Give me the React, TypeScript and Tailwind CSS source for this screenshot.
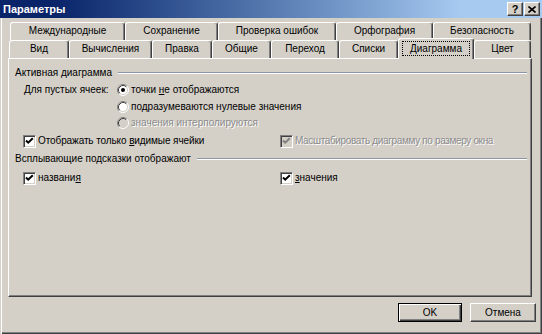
import React from "react";

function Radio({ checked = false, disabled = false }: { checked?: boolean; disabled?: boolean }) {
  return (
    <svg width="12" height="12" viewBox="0 0 12 12" className="shrink-0">
      <circle cx="6" cy="6" r="5" fill={disabled ? "#d4d0c8" : "#ffffff"} />
      <path d="M2.11 9.89 A5.5 5.5 0 0 1 9.89 2.11" stroke="#808080" strokeWidth="1" fill="none" />
      <path d="M9.89 2.11 A5.5 5.5 0 0 1 2.11 9.89" stroke="#ffffff" strokeWidth="1" fill="none" />
      <path d="M2.82 9.18 A4.5 4.5 0 0 1 9.18 2.82" stroke="#404040" strokeWidth="1" fill="none" />
      <path d="M9.18 2.82 A4.5 4.5 0 0 1 2.82 9.18" stroke="#d4d0c8" strokeWidth="1" fill="none" />
      {checked && <circle cx="6" cy="6" r="2" fill="#000000" />}
    </svg>
  );
}

function Check({ checked = true, disabled = false }: { checked?: boolean; disabled?: boolean }) {
  return (
    <div
      className={
        disabled
          ? "w-[13px] h-[13px] shrink-0 bg-[#d4d0c8] border border-t-[#808080] border-l-[#808080] border-r-white border-b-white shadow-[inset_1px_1px_0_#404040,inset_-1px_-1px_0_#d4d0c8] flex items-center justify-center"
          : "w-[13px] h-[13px] shrink-0 bg-white border border-t-[#808080] border-l-[#808080] border-r-white border-b-white shadow-[inset_1px_1px_0_#404040,inset_-1px_-1px_0_#d4d0c8] flex items-center justify-center"
      }
    >
      {checked && (
        <svg width="9" height="9" viewBox="0 0 9 9">
          <path
            d="M1 3.5 L3.2 5.7 L7.8 1.2"
            stroke={disabled ? "#808080" : "#000000"}
            strokeWidth="2"
            fill="none"
          />
        </svg>
      )}
    </div>
  );
}

function Tab({ label, w }: { label: string; w: string }) {
  return (
    <div
      className={
        w +
        " h-[18px] shrink-0 flex items-start pt-[2px] justify-center border-l border-t border-white border-r border-r-[#404040] rounded-t-[3px] shadow-[inset_-1px_0_0_#808080]"
      }
    >
      {label}
    </div>
  );
}

function GroupHeader({ label }: { label: string }) {
  return (
    <div className="flex items-center h-[16px] pl-[6px] pr-[4px]">
      <span>{label}</span>
      <div className="flex-1 ml-[6px] h-[2px] border-t border-[#8a96a8] border-b border-b-white" />
    </div>
  );
}

export default function App() {
  return (
    <div className="w-[542px] h-[334px] bg-[#d4d0c8] flex flex-col font-['Liberation_Sans',Arial,sans-serif] text-[10px] leading-[12px] text-black overflow-hidden shadow-[inset_1px_0_0_#d4d0c8,inset_2px_0_0_#ffffff,inset_-1px_-1px_0_#404040,inset_-2px_-2px_0_#808080]">
      {/* Title bar */}
      <div className="h-[18px] shrink-0 flex items-center bg-linear-to-r from-[#0a246a] from-10% to-[#a6caf0] to-85% pl-[3px] pr-[2px]">
        <span className="flex-1 text-white font-bold text-[11px]">Параметры</span>
        <div className="flex gap-[1px]">
          <div className="w-[16px] h-[14px] bg-[#d4d0c8] border-t border-l border-white border-r border-b border-r-[#404040] border-b-[#404040] shadow-[inset_-1px_-1px_0_#808080] flex items-center justify-center font-bold text-[11px] leading-[11px]">
            ?
          </div>
          <div className="w-[16px] h-[14px] bg-[#d4d0c8] border-t border-l border-white border-r border-b border-r-[#404040] border-b-[#404040] shadow-[inset_-1px_-1px_0_#808080] flex items-center justify-center">
            <svg width="8" height="7" viewBox="0 0 8 7">
              <path d="M0.5 0.5 L7.5 6.5 M7.5 0.5 L0.5 6.5" stroke="#000" strokeWidth="1.6" />
            </svg>
          </div>
        </div>
      </div>

      {/* Tabs */}
      <div className="pt-[4px] flex flex-col">
        <div className="flex h-[18px] ml-[10px]">
          <Tab w="w-[115px]" label="Международные" />
          <Tab w="w-[93px]" label="Сохранение" />
          <Tab w="w-[118px]" label="Проверка ошибок" />
          <Tab w="w-[97px]" label="Орфография" />
          <Tab w="w-[98px]" label="Безопасность" />
        </div>
        <div className="flex h-[18px] ml-[9px] items-end">
          <Tab w="w-[60px]" label="Вид" />
          <Tab w="w-[83px]" label="Вычисления" />
          <Tab w="w-[60px]" label="Правка" />
          <Tab w="w-[59px]" label="Общие" />
          <Tab w="w-[68px]" label="Переход" />
          <Tab w="w-[59px]" label="Списки" />
          <div className="relative z-10 w-[76px] h-[21px] -mb-[1px] shrink-0 bg-[#d4d0c8] flex items-start justify-center pt-[2px] border-l border-t border-white border-r border-r-[#404040] rounded-t-[3px] shadow-[inset_-1px_0_0_#808080]">
            <div className="w-[68px] h-[15px] border border-dotted border-black flex items-center justify-center">
              Диаграмма
            </div>
          </div>
          <Tab w="w-[57px]" label="Цвет" />
        </div>

        {/* Panel */}
        <div className="ml-[8px] w-[524px] h-[239px] pt-[6px] flex flex-col border-l border-t border-white border-r border-b border-r-[#404040] border-b-[#404040] shadow-[inset_-1px_-1px_0_#808080]">
          <GroupHeader label="Активная диаграмма" />
          <div className="flex items-center h-[17px] pl-[15px]">
            <span className="w-[93px]">Для пустых ячеек:</span>
            <Radio checked />
            <span className="ml-[2px]">
              точки <span className="underline underline-offset-[1px]">н</span>е отображаются
            </span>
          </div>
          <div className="flex items-center h-[17px] pl-[108px]">
            <Radio />
            <span className="ml-[2px]">подразумеваются нулевые значения</span>
          </div>
          <div className="flex items-center h-[16px] pl-[108px]">
            <Radio disabled />
            <span className="ml-[2px] text-[#8c8c8c] [text-shadow:1px_1px_0_#ffffff]">значения интерполируются</span>
          </div>
          <div className="flex items-center h-[20px] pl-[14px]">
            <div className="w-[257px] flex items-center">
              <Check />
              <span className="ml-[2px] tracking-[-0.1px]">
                Отображать только <span className="underline underline-offset-[1px]">в</span>идимые ячейки
              </span>
            </div>
            <div className="flex items-center">
              <Check disabled />
              <span className="ml-[2px] tracking-[-0.35px] text-[#8c8c8c] [text-shadow:1px_1px_0_#ffffff]">
                Масштабировать диаграмму по размеру окна
              </span>
            </div>
          </div>
          <GroupHeader label="Всплывающие подсказки отображают" />
          <div className="flex items-center h-[22px] pl-[14px]">
            <div className="w-[257px] flex items-center">
              <Check />
              <span className="ml-[2px]">
                названи<span className="underline underline-offset-[1px]">я</span>
              </span>
            </div>
            <div className="flex items-center">
              <Check />
              <span className="ml-[2px]">
                <span className="underline underline-offset-[1px]">з</span>начения
              </span>
            </div>
          </div>
        </div>
      </div>

      {/* Buttons */}
      <div className="mt-[6px] flex justify-end pr-[6px] gap-[8px]">
        <div className="w-[64px] h-[19px] border border-black shadow-[inset_1px_1px_0_#ffffff,inset_-1px_-1px_0_#404040,inset_-2px_-2px_0_#808080] flex items-center justify-center">
          OK
        </div>
        <div className="w-[66px] h-[19px] border-t border-l border-white border-r border-b border-r-[#404040] border-b-[#404040] shadow-[inset_-1px_-1px_0_#808080] flex items-center justify-center">
          Отмена
        </div>
      </div>
    </div>
  );
}
